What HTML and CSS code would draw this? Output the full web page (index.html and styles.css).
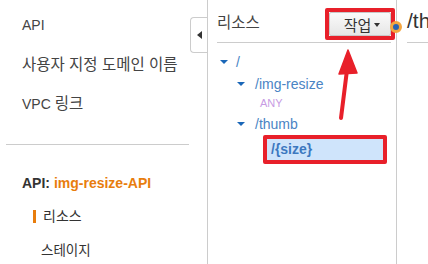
FILE: index.html
```html
<!DOCTYPE html>
<html lang="ko">
<head>
    <meta charset="UTF-8">
    <title>API Gateway - 리소스</title>
    <link rel="stylesheet" href="styles.css">
</head>
<body>
    <div class="page">
        <nav class="sidenav">
            <ul class="nav-top">
                <li>API</li>
                <li class="ko">사용자 지정 도메인 이름</li>
                <li>VPC <span class="ko">링크</span></li>
            </ul>
            <div class="nav-sep"></div>
            <div class="api-title">API: <span class="api-name">img-resize-API</span></div>
            <ul class="nav-sub">
                <li class="active">리소스</li>
                <li>스테이지</li>
            </ul>
        </nav>

        <section class="resources">
            <!-- collapse tab sits over the panel border -->
            <div class="collapse-tab">
                <svg width="5" height="8" viewBox="0 0 5 8"><path d="M5 0 L0 4 L5 8 Z" fill="#333"/></svg>
            </div>
            <div class="res-head">
                <span class="res-title">리소스</span>
                <span class="mark">
                    <button class="action-btn">작업<span class="caret"></span></button>
                </span>
            </div>
            <ul class="tree">
                <li class="node lvl0"><span class="tri"></span>/</li>
                <li class="node lvl1"><span class="tri"></span>/img-resize</li>
                <li class="method">ANY</li>
                <li class="node lvl1"><span class="tri"></span>/thumb</li>
                <li class="selected-wrap">
                    <div class="mark mark-row"><div class="selected">/{size}</div></div>
                </li>
            </ul>
        </section>

        <section class="detail">
            <span class="dot"></span>
            <div class="detail-head">/th</div>
        </section>

        <svg class="arrow" width="428" height="264" viewBox="0 0 428 264">
            <line x1="341" y1="118" x2="347" y2="70" stroke="#e8202a" stroke-width="4" stroke-linecap="round"/>
            <path d="M348 50 L339 74 L357 73 Z" fill="#e8202a" stroke="#e8202a" stroke-width="1.5" stroke-linejoin="round"/>
        </svg>
    </div>
</body>
</html>
```

FILE: styles.css
```css
body {
    margin: 0;
    font-family: 'Liberation Sans', 'Noto Sans CJK KR', sans-serif;
    font-size: 14px;
    color: #444;
    background: #fff;
}
ul {
    list-style: none;
    margin: 0;
    padding: 0;
}
.page {
    position: relative;
    display: flex;
    width: 428px;
    height: 264px;
    overflow: hidden;
}

/* left navigation */
.sidenav {
    width: 207px;
    flex-shrink: 0;
    padding-top: 6px;
}
.nav-top li {
    height: 39px;
    line-height: 39px;
    padding-left: 22px;
}
.nav-top .ko {
    font-size: 15.5px;
}
.nav-sep {
    height: 1px;
    background: #ccc;
    margin: 21px 18px 0 6px;
}
.api-title {
    margin-top: 28px;
    padding-left: 22px;
    font-weight: bold;
    color: #333;
    line-height: 20px;
}
.api-name {
    color: #e87d0d;
}
.nav-sub {
    margin-top: 17px;
    padding-left: 33px;
}
.nav-sub li {
    height: 33px;
    line-height: 20px;
    padding-left: 8px;
    color: #333;
}
.nav-sub li.active {
    border-left: 3px solid #e87d0d;
    height: 13px;
    line-height: 13px;
    margin-bottom: 18px;
    padding-left: 7px;
}
.nav-sub li:last-child {
    font-size: 13.5px;
}

/* resources panel */
.resources {
    position: relative;
    width: 189px;
    flex-shrink: 0;
    border-left: 1px solid #ccc;
    box-sizing: border-box;
}
.collapse-tab {
    position: absolute;
    left: -18px;
    top: 17px;
    width: 16px;
    height: 34px;
    border: 1px solid #ccc;
    border-right: none;
    border-radius: 4px 0 0 4px;
    background: #fff;
    display: flex;
    align-items: center;
    justify-content: center;
}
.res-head {
    display: flex;
    align-items: center;
    justify-content: space-between;
    height: 42px;
    margin: 0 5px 0 9px;
    border-bottom: 1px solid #ccc;
    position: relative;
}
.res-title {
    color: #444;
    font-size: 15.5px;
}
.mark {
    border: 4px solid #e8202a;
    border-radius: 2px;
}
.res-head .mark {
    position: absolute;
    right: -4px;
    top: 8px;
    padding: 0;
}
.action-btn {
    display: flex;
    align-items: center;
    gap: 3px;
    margin: 0;
    height: 24px;
    width: 62px;
    justify-content: center;
    border: 1px solid #c8c8c8;
    border-radius: 2px;
    background: linear-gradient(#fafafa, #e6e6e6);
    font-family: 'Liberation Sans', 'Noto Sans CJK KR', sans-serif;
    font-size: 15px;
    color: #333;
    padding: 0 0 0 4px;
}
.caret {
    width: 0;
    height: 0;
    border-left: 3.5px solid transparent;
    border-right: 3.5px solid transparent;
    border-top: 4px solid #333;
    margin-top: 2px;
}

.tree {
    padding-top: 8px;
    font-size: 14px;
    color: #4a84c4;
}
.node {
    display: flex;
    align-items: center;
    height: 22px;
}
.lvl0 { padding-left: 12px; }
.lvl1 { padding-left: 29px; }
.lvl0 .tri { margin-right: 8px; }
.lvl1 .tri { margin-right: 10px; }
.tri {
    width: 0;
    height: 0;
    border-left: 4px solid transparent;
    border-right: 4px solid transparent;
    border-top: 4px solid #1a67b8;
}
.method {
    padding-left: 52px;
    height: 18px;
    line-height: 16px;
    font-size: 11px;
    color: #c79be3;
}
.selected-wrap {
    padding: 0 0 0 55px;
}
.mark-row {
    width: 116px;
}
.selected {
    background: #cfe4fb;
    color: #3c78c0;
    font-weight: bold;
    height: 21px;
    line-height: 21px;
    padding-left: 4px;
}

/* detail panel */
.detail {
    position: relative;
    flex: 1;
    min-width: 0;
    border-left: 1px solid #ccc;
}
.dot {
    position: absolute;
    left: -7px;
    top: 21px;
    width: 6px;
    height: 6px;
    border-radius: 50%;
    background: #2a64b4;
    border: 3.5px solid #f4a640;
}
.detail-head {
    margin-left: 10px;
    height: 42px;
    line-height: 42px;
    font-size: 21px;
    color: #333;
    border-bottom: 1px solid #ccc;
    white-space: nowrap;
}

.arrow {
    position: absolute;
    left: 0;
    top: 0;
    pointer-events: none;
}
```
